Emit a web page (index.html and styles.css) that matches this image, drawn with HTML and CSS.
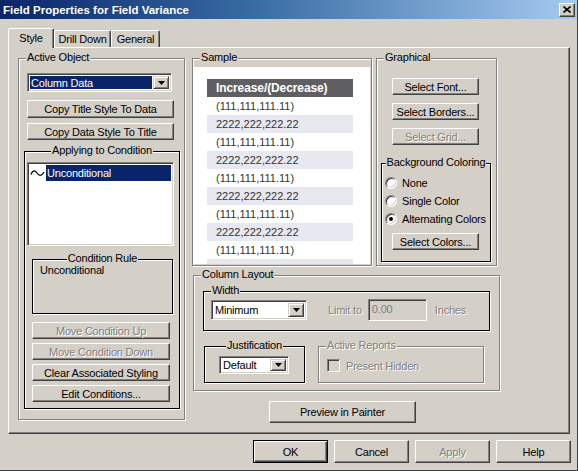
FILE: index.html
```html
<!DOCTYPE html>
<html>
<head>
<meta charset="utf-8">
<link rel="stylesheet" href="styles.css">
</head>
<body>
<div class="window">
  <div class="titlebar">
    <span class="title">Field Properties for Field Variance</span>
    <span class="close"><svg width="8" height="7" viewBox="0 0 8 7"><path d="M0.5 0.5 L7.5 6.5 M7.5 0.5 L0.5 6.5" stroke="#000" stroke-width="1.6"/></svg></span>
  </div>
  <div class="tabs">
    <div class="tab active t-style">Style</div>
    <div class="tab t-drill">Drill Down</div>
    <div class="tab t-general">General</div>
  </div>
  <div class="panel">
    <div class="group active-object">
      <div class="lg"><span>Active Object</span></div>
      <div class="combo combo-col">
        <div class="combo-field sel">Column Data</div>
        <div class="combo-btn"><svg width="7" height="4" viewBox="0 0 7 4"><path d="M0 0 H7 L3.5 4 Z" fill="#000"/></svg></div>
      </div>
      <div class="btn btn-copy1">Copy Title Style To Data</div>
      <div class="btn btn-copy2">Copy Data Style To Title</div>
      <div class="group black applying">
        <div class="lg-c"><span>Applying to Condition</span></div>
        <div class="listbox">
          <div class="list-item">
            <svg class="tilde" width="15" height="10" viewBox="0 0 15 10"><path d="M1 6.5 C2.5 2, 5 2, 7 5 S11.5 8.5, 14 4" stroke="#000" fill="none" stroke-width="1.3"/></svg>
            <span class="item-sel">Unconditional</span>
          </div>
        </div>
        <div class="group black cond-rule">
          <div class="lg-c"><span>Condition Rule</span></div>
          <div class="rule-text">Unconditional</div>
        </div>
        <div class="btn cbtn disabled first">Move Condition Up</div>
        <div class="btn cbtn disabled">Move Condition Down</div>
        <div class="btn cbtn">Clear Associated Styling</div>
        <div class="btn cbtn">Edit Conditions...</div>
      </div>
    </div>

    <div class="right">
      <div class="toprow">
        <div class="group sample">
          <div class="lg"><span>Sample</span></div>
          <div class="sample-white">
            <div class="sample-table">
              <div class="s-head">Increase/(Decrease)</div>
              <div class="s-row">(111,111,111.11)</div>
              <div class="s-row alt">2222,222,222.22</div>
              <div class="s-row">(111,111,111.11)</div>
              <div class="s-row alt">2222,222,222.22</div>
              <div class="s-row">(111,111,111.11)</div>
              <div class="s-row alt">2222,222,222.22</div>
              <div class="s-row">(111,111,111.11)</div>
              <div class="s-row alt">2222,222,222.22</div>
              <div class="s-row">(111,111,111.11)</div>
              <div class="s-row alt">2222,222,222.22</div>
            </div>
          </div>
        </div>
        <div class="group graphical">
          <div class="lg"><span>Graphical</span></div>
          <div class="btn gbtn first">Select Font...</div>
          <div class="btn gbtn">Select Borders...</div>
          <div class="btn gbtn disabled">Select Grid...</div>
          <div class="group black bgcolor">
            <div class="lg-c"><span>Background Coloring</span></div>
            <div class="radios">
              <div class="radio-row"><span class="radio"></span><span>None</span></div>
              <div class="radio-row"><span class="radio"></span><span>Single Color</span></div>
              <div class="radio-row"><span class="radio on"><span class="dot"></span></span><span>Alternating Colors</span></div>
            </div>
            <div class="btn gbtn colors">Select Colors...</div>
          </div>
        </div>
      </div>

      <div class="group column-layout">
        <div class="lg"><span>Column Layout</span></div>
        <div class="group black width-grp">
          <div class="lg"><span>Width</span></div>
          <div class="width-row">
            <div class="combo combo-min">
              <div class="combo-field">Minimum</div>
              <div class="combo-btn"><svg width="7" height="4" viewBox="0 0 7 4"><path d="M0 0 H7 L3.5 4 Z" fill="#000"/></svg></div>
            </div>
            <span class="dis-text limit">Limit to</span>
            <div class="textbox">0.00</div>
            <span class="dis-text inches">Inches</span>
          </div>
        </div>
        <div class="lower-row">
          <div class="group black justif">
            <div class="lg-c"><span>Justification</span></div>
            <div class="combo combo-def">
              <div class="combo-field">Default</div>
              <div class="combo-btn"><svg width="7" height="4" viewBox="0 0 7 4"><path d="M0 0 H7 L3.5 4 Z" fill="#000"/></svg></div>
            </div>
          </div>
          <div class="group active-reports">
            <div class="lg"><span class="dis-text">Active Reports</span></div>
            <div class="check-row">
              <span class="checkbox"></span>
              <span class="dis-text">Present Hidden</span>
            </div>
          </div>
        </div>
      </div>

      <div class="btn preview">Preview in Painter</div>
    </div>
  </div>
  <div class="footer">
    <div class="btn fbtn default">OK</div>
    <div class="btn fbtn">Cancel</div>
    <div class="btn fbtn disabled">Apply</div>
    <div class="btn fbtn">Help</div>
  </div>
</div>
</body>
</html>
```

FILE: styles.css
```css
* { box-sizing: border-box; }
body {
  margin: 0;
  font-family: "Liberation Sans", Arial, sans-serif;
  font-size: 11px;
  letter-spacing: -0.2px;
  color: #000;
  background: #d4d0c8;
}
.window {
  width: 578px;
  height: 471px;
  background: #d4d0c8;
  overflow: hidden;
  border-right: 1px solid #404040;
  border-bottom: 1px solid #404040;
}
.titlebar {
  height: 19px;
  background: linear-gradient(90deg, #0a246a 0%, #3a6ea5 45%, #a6caf0 100%);
  display: flex;
  align-items: center;
  padding: 0 2px 0 3px;
}
.title {
  flex: 1;
  color: #fff;
  font-weight: bold;
  font-size: 11.5px;
  letter-spacing: 0;
}
.close {
  width: 16px;
  height: 14px;
  background: #d4d0c8;
  border: 1px solid;
  border-color: #fff #404040 #404040 #fff;
  box-shadow: inset -1px -1px #808080;
  display: flex;
  align-items: center;
  justify-content: center;
}
.close svg { display: block; }

/* tabs */
.tabs {
  height: 28px;
  display: flex;
  align-items: flex-end;
  padding-left: 8px;
}
.tab {
  height: 17px;
  border: 1px solid;
  border-bottom: none;
  border-color: #fff #404040 transparent #fff;
  border-radius: 2px 2px 0 0;
  box-shadow: inset -1px 0 #808080;
  display: flex;
  align-items: center;
  justify-content: center;
  background: #d4d0c8;
}
.tab.active {
  height: 20px;
  margin-bottom: -1px;
  position: relative;
  z-index: 1;
  padding-bottom: 2px;
}
.t-style { width: 46px; }
.t-drill { width: 57px; }
.t-general { width: 49px; }

/* panel */
.panel {
  margin-left: 8px;
  width: 562px;
  height: 387px;
  border: 1px solid;
  border-color: #fff #404040 #404040 #fff;
  box-shadow: inset -1px -1px #808080;
  padding: 10px 0 0 9px;
  display: flex;
  gap: 7px;
}

/* group boxes */
.group {
  position: relative;
  border: 1px solid #808080;
  box-shadow: inset 1px 1px #fff, 1px 1px #fff;
}
.group.black {
  border-color: #000;
  box-shadow: inset 1px 1px #fff, 1px 1px #fff;
}
.lg {
  position: absolute;
  top: -8px;
  left: 7px;
  line-height: 13px;
  white-space: nowrap;
}
.lg > span, .lg-c > span {
  background: #d4d0c8;
  padding: 0 1px;
}
.lg-c {
  position: absolute;
  top: -8px;
  left: 0;
  right: 0;
  text-align: center;
  line-height: 13px;
  white-space: nowrap;
}

/* buttons */
.btn {
  border: 1px solid;
  border-color: #fff #404040 #404040 #fff;
  box-shadow: inset -1px -1px #808080;
  background: #d4d0c8;
  display: flex;
  align-items: center;
  justify-content: center;
  white-space: nowrap;
}
.btn.disabled, .dis-text {
  color: #808080;
  text-shadow: 1px 1px 0 #fff;
}
.btn.default {
  border: 1px solid #000;
  box-shadow: inset 1px 1px #fff, inset -1px -1px #404040, inset -2px -2px #808080;
}

/* combo */
.combo {
  display: flex;
  background: #fff;
  border: 1px solid;
  border-color: #808080 #fff #fff #808080;
  box-shadow: inset 1px 1px #404040, inset -1px -1px #d4d0c8;
  padding: 2px;
}
.combo-field {
  flex: 1;
  display: flex;
  align-items: center;
  padding-left: 1px;
  white-space: nowrap;
}
.combo-field.sel {
  background: #0a246a;
  color: #fff;
  margin-right: 1px;
}
.combo-btn {
  width: 16px;
  background: #d4d0c8;
  border: 1px solid;
  border-color: #d4d0c8 #404040 #404040 #d4d0c8;
  box-shadow: inset 1px 1px #fff, inset -1px -1px #808080;
  display: flex;
  align-items: center;
  justify-content: center;
}
.combo-btn svg { display: block; }

/* active object group */
.active-object {
  width: 167px;
  height: 362px;
  padding: 14px 0 0 8px;
  display: flex;
  flex-direction: column;
  align-items: flex-start;
}
.combo-col { width: 145px; height: 19px; }
.btn-copy1 { width: 147px; height: 18px; margin-top: 8px; }
.btn-copy2 { width: 147px; height: 17px; margin-top: 5px; }
.applying {
  width: 156px;
  height: 258px;
  margin-top: 11px;
  margin-left: -3px;
  padding: 10px 0 0 2px;
  display: flex;
  flex-direction: column;
  align-items: flex-start;
}
.listbox {
  width: 147px;
  height: 84px;
  background: #fff;
  border: 1px solid;
  border-color: #808080 #fff #fff #808080;
  box-shadow: inset 1px 1px #404040, inset -1px -1px #d4d0c8;
  padding: 2px 2px 0 2px;
}
.list-item {
  display: flex;
  align-items: center;
  height: 16px;
}
.tilde { display: block; margin-right: 1px; }
.item-sel {
  flex: 1;
  background: #0a246a;
  color: #fff;
  height: 16px;
  line-height: 16px;
  padding-left: 1px;
}
.cond-rule {
  width: 141px;
  height: 55px;
  margin-top: 13px;
  margin-left: 5px;
  padding: 4px 0 0 7px;
}
.rule-text { line-height: 13px; }
.cbtn {
  width: 138px;
  height: 17px;
  margin-left: 5px;
  margin-top: 4px;
}
.cbtn.first { margin-top: 8px; }

/* right column */
.right {
  display: flex;
  flex-direction: column;
  align-items: flex-start;
}
.toprow {
  display: flex;
  gap: 4px;
}
.sample {
  width: 180px;
  height: 208px;
  display: flex;
  flex-direction: column;
}
.sample-white {
  flex: 1;
  margin: 8px 1px 1px 1px;
  background: #fff;
  padding: 12px 0 0 13px;
  overflow: hidden;
}
.sample-table { width: 146px; }
.s-head {
  height: 18px;
  background: #5f5f63;
  color: #fff;
  font-weight: bold;
  font-size: 12px;
  letter-spacing: -0.1px;
  line-height: 18px;
  padding-left: 9px;
}
.s-row {
  height: 18px;
  line-height: 18px;
  padding-left: 9px;
  color: #333;
  font-size: 11px;
  letter-spacing: 0;
}
.s-row.alt { background: #e8e8f0; }

.graphical {
  width: 121px;
  height: 208px;
  padding: 19px 0 0 15px;
  display: flex;
  flex-direction: column;
  align-items: flex-start;
}
.gbtn {
  width: 87px;
  height: 17px;
  margin-top: 8px;
}
.gbtn.first { margin-top: 0; }
.bgcolor {
  width: 110px;
  height: 99px;
  margin-top: 18px;
  margin-left: -11px;
  padding: 10px 0 0 3px;
  display: flex;
  flex-direction: column;
  align-items: flex-start;
}
.radio-row {
  height: 18px;
  display: flex;
  align-items: center;
  gap: 5px;
  white-space: nowrap;
}
.radio {
  width: 12px;
  height: 12px;
  border-radius: 50%;
  background: #fff;
  border: 1px solid;
  border-color: #808080 #fff #fff #808080;
  box-shadow: inset 1px 1px #404040, inset -1px -1px #d4d0c8;
  display: flex;
  align-items: center;
  justify-content: center;
}
.dot {
  width: 4px;
  height: 4px;
  border-radius: 50%;
  background: #000;
}
.colors { margin-top: 5px; margin-left: 7px; }

/* column layout */
.column-layout {
  width: 307px;
  height: 116px;
  margin-top: 9px;
  margin-left: 1px;
  padding: 15px 0 0 9px;
}
.width-grp {
  width: 287px;
  height: 40px;
}
.width-row {
  display: flex;
  align-items: center;
  height: 22px;
  margin-top: 7px;
  padding-left: 7px;
}
.combo-min { width: 96px; height: 20px; }
.limit { margin-left: 21px; }
.textbox {
  width: 59px;
  height: 22px;
  margin-left: 6px;
  border: 1px solid;
  border-color: #808080 #fff #fff #808080;
  box-shadow: inset 1px 1px #404040, inset -1px -1px #d4d0c8;
  background: #d4d0c8;
  color: #808080;
  padding: 3px 0 0 3px;
}
.inches { margin-left: 8px; }
.lower-row {
  display: flex;
  gap: 13px;
  margin-top: 15px;
  margin-left: 1px;
}
.justif {
  width: 101px;
  height: 37px;
  padding: 9px 0 0 14px;
}
.combo-def { width: 70px; height: 18px; }
.active-reports {
  width: 166px;
  height: 37px;
  padding: 12px 0 0 8px;
}
.check-row {
  display: flex;
  align-items: center;
  gap: 6px;
}
.checkbox {
  width: 13px;
  height: 13px;
  border: 1px solid;
  border-color: #808080 #fff #fff #808080;
  box-shadow: inset 1px 1px #404040, inset -1px -1px #d4d0c8;
  background: #d4d0c8;
}

.preview {
  width: 147px;
  height: 22px;
  margin-top: 10px;
  margin-left: 77px;
}

/* footer */
.footer {
  display: flex;
  justify-content: flex-end;
  gap: 6px;
  padding-right: 6px;
  margin-top: 6px;
}
.fbtn {
  width: 75px;
  height: 23px;
}
```
